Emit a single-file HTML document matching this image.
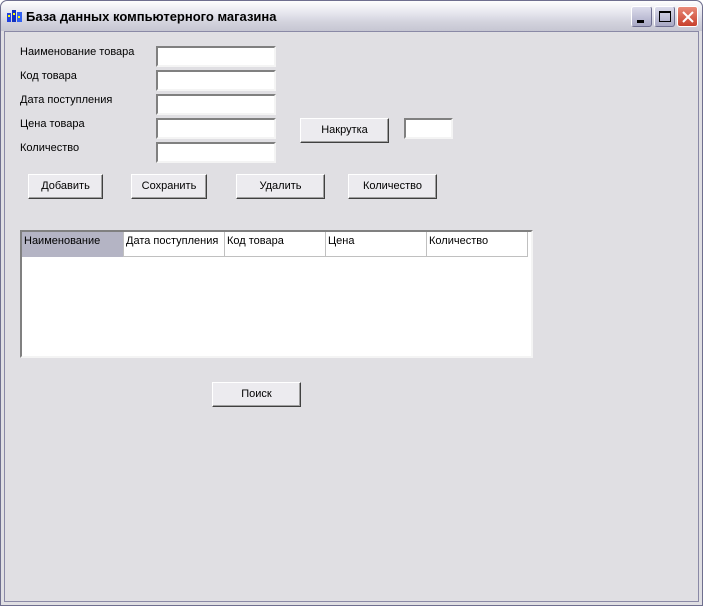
<!DOCTYPE html><html><head><meta charset="utf-8"><style>
*{box-sizing:border-box;margin:0;padding:0}
body{width:703px;height:606px;overflow:hidden;background:#fff;font-family:"Liberation Sans",sans-serif;font-size:11px;position:relative}
.win{position:absolute;left:0;top:0;width:703px;height:606px;background:#e0dfe3;border:1px solid #6f6f8f;border-radius:7px 7px 0 0}
.frame{position:absolute;left:3px;top:30px;right:3px;bottom:3px;border:1px solid #8a89a6;}
.title{position:absolute;left:0;top:0;width:701px;height:30px;border-radius:7px 7px 0 0;background:linear-gradient(#fefefe,#e6e6ee 40%,#d3d3dd 70%,#c6c6d2);}
.title span{position:absolute;left:25px;top:8px;font-weight:bold;font-size:13px;color:#000}
.ab{position:absolute}
.lbl{position:absolute;color:#000}
.inp{position:absolute;width:120px;height:21px;background:#fff;border:2px solid;border-color:#808080 #f4f4f4 #f4f4f4 #808080;outline:1px solid transparent}
.btn{position:absolute;height:25px;background:#ecebef;border:1px solid;border-color:#fff #404040 #404040 #fff;box-shadow:inset -1px -1px 0 #a0a0a0;text-align:center;line-height:23px}
.tb{position:absolute;top:5px;width:21px;height:21px;border:1px solid #fff;border-radius:3px}
</style></head><body>
<div class="win">
<div class="title"><svg class="ab" style="left:6px;top:9px" width="16" height="13"><rect x="0" y="3" width="4" height="9" fill="#2040e0"/><rect x="5" y="0" width="4" height="12" fill="#1030c0"/><rect x="10" y="2" width="5" height="10" fill="#3060f0"/><rect x="1" y="5" width="2" height="2" fill="#ff0"/><rect x="6" y="3" width="2" height="2" fill="#ff0"/><rect x="11" y="6" width="2" height="2" fill="#ff0"/></svg><span>База данных компьютерного магазина</span>
<div class="tb" style="left:630px;background:linear-gradient(#dcdcec,#a8a8c4);border-color:#fff #6e6e90 #6e6e90 #fff"><div class="ab" style="left:5px;top:13px;width:7px;height:3px;background:#000"></div></div>
<div class="tb" style="left:653px;background:linear-gradient(#dcdcec,#a8a8c4);border-color:#fff #6e6e90 #6e6e90 #fff"><div class="ab" style="left:4px;top:4px;width:12px;height:11px;border:1px solid #000;border-top-width:2px"></div></div>
<div class="tb" style="left:676px;background:linear-gradient(#e88a78,#c8402c);"><svg class="ab" style="left:3px;top:3px" width="14" height="14"><path d="M2 2L12 12M12 2L2 12" stroke="#fff" stroke-width="2"/></svg></div>
</div>
<div class="frame"></div>
</div>
<div class="lbl" style="left:20px;top:46px">Наименование товара</div>
<div class="lbl" style="left:20px;top:70px">Код товара</div>
<div class="lbl" style="left:20px;top:94px">Дата поступления</div>
<div class="lbl" style="left:20px;top:118px">Цена товара</div>
<div class="lbl" style="left:20px;top:142px">Количество</div>
<div class="inp" style="left:156px;top:46px"></div>
<div class="inp" style="left:156px;top:70px"></div>
<div class="inp" style="left:156px;top:94px"></div>
<div class="inp" style="left:156px;top:118px"></div>
<div class="inp" style="left:156px;top:142px"></div>
<div class="btn" style="left:300px;top:118px;width:89px">Накрутка</div>
<div class="inp" style="left:404px;top:118px;width:49px"></div>
<div class="btn" style="left:28px;top:174px;width:75px">Добавить</div>
<div class="btn" style="left:131px;top:174px;width:76px">Сохранить</div>
<div class="btn" style="left:236px;top:174px;width:89px">Удалить</div>
<div class="btn" style="left:348px;top:174px;width:89px">Количество</div>
<div class="ab" style="left:20px;top:230px;width:513px;height:128px;background:#fff;border:2px solid;border-color:#808080 #f4f4f4 #f4f4f4 #808080">
<div class="ab" style="left:0;top:0;width:101px;height:25px;background:#b4b4c4;padding:3px 2px">Наименование</div>
<div class="ab" style="left:101px;top:0;width:101px;height:25px;border-left:1px solid #c0c0c0;border-bottom:1px solid #c0c0c0;padding:3px 2px">Дата поступления</div>
<div class="ab" style="left:202px;top:0;width:101px;height:25px;border-left:1px solid #c0c0c0;border-bottom:1px solid #c0c0c0;padding:3px 2px">Код товара</div>
<div class="ab" style="left:303px;top:0;width:101px;height:25px;border-left:1px solid #c0c0c0;border-bottom:1px solid #c0c0c0;padding:3px 2px">Цена</div>
<div class="ab" style="left:404px;top:0;width:102px;height:25px;border-left:1px solid #c0c0c0;border-right:1px solid #c0c0c0;border-bottom:1px solid #c0c0c0;padding:3px 2px">Количество</div>
</div>
<div class="btn" style="left:212px;top:382px;width:89px">Поиск</div>
</body></html>
